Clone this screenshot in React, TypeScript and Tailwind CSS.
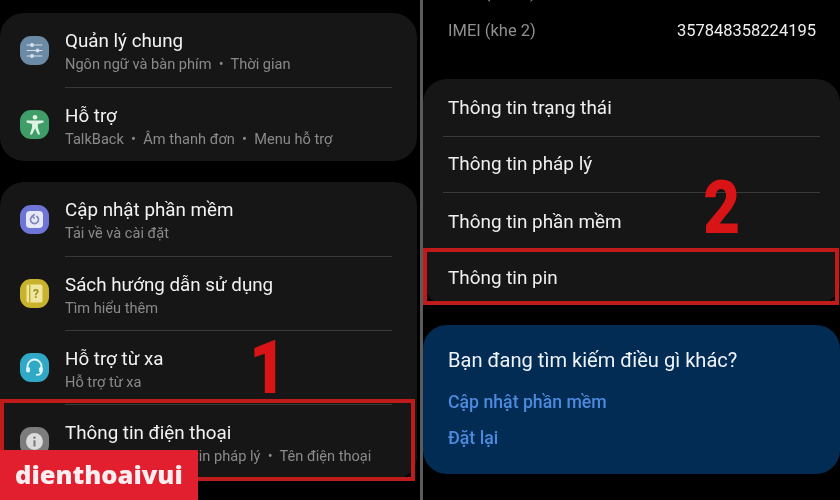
import type { FC, ReactNode } from 'react';

const FONT = "font-['Roboto','Noto_Sans',sans-serif]";

interface IRowProps {
  icon: ReactNode;
  title: string;
  sub: string;
  last?: boolean;
}

const SquircleIcon: FC<{ color: string; children: ReactNode }> = ({ color, children }) => (
  <div className={`w-[29px] h-[29px] -mt-px rounded-[11px] flex items-center justify-center shrink-0 ${color}`}>
    {children}
  </div>
);

const SlidersIcon = () => (
  <svg width="19" height="19" viewBox="0 0 19 19" fill="none" stroke="#d5dee8" strokeWidth="1.1" strokeLinecap="round">
    <path d="M2 4h15M2 9.5h15M2 15h15" />
    <circle cx="7" cy="4" r="1.4" fill="#d5dee8" />
    <circle cx="12.5" cy="9.5" r="1.4" fill="#d5dee8" />
    <circle cx="7" cy="15" r="1.4" fill="#d5dee8" />
  </svg>
);

const PersonIcon = () => (
  <svg width="20" height="22" viewBox="0 0 20 22" fill="#dff3e4">
    <circle cx="10" cy="3.2" r="2.3" />
    <path d="M1.5 6.6h17v1.9l-5.6 1.4v3.6l2.2 6.9h-2.1L10 14.2l-3 6.2H4.9l2.2-6.9V9.9L1.5 8.5z" />
  </svg>
);

const UpdateIcon = () => (
  <div className="w-[17px] h-[17px] rounded-[4px] bg-[#e6e8f8] flex items-center justify-center">
    <svg width="13" height="13" viewBox="0 0 13 13" fill="none" stroke="#7d82b8" strokeWidth="1.6" strokeLinecap="round">
      <path d="M8.8 3.4a4 4 0 1 1-4.6 0" />
      <path d="M6.2 1.6 4.2 3.3 6.2 5" />
    </svg>
  </div>
);

const BookIcon = () => (
  <svg width="21" height="21" viewBox="0 0 21 21" fill="none">
    <rect x="2.5" y="1.5" width="16" height="18" rx="2" fill="#efe6a0" />
    <rect x="5" y="1.5" width="1.4" height="18" fill="#c3ad25" />
    <text x="12" y="14.5" textAnchor="middle" fontSize="12" fontWeight="700" fontFamily="Roboto, sans-serif" fill="#a08c1c">?</text>
  </svg>
);

const HeadsetIcon = () => (
  <svg width="21" height="21" viewBox="0 0 21 21" fill="none" stroke="#e4f6fa" strokeWidth="1.8" strokeLinecap="round">
    <path d="M3.5 12V9.5a7 7 0 0 1 14 0V12" />
    <path d="M17.5 14c0 2.4-2 3.8-4.8 3.8" />
    <rect x="2.6" y="10.5" width="3" height="4.6" rx="1.2" fill="#e4f6fa" strokeWidth="0.8" />
    <rect x="15.4" y="10.5" width="3" height="4.6" rx="1.2" fill="#e4f6fa" strokeWidth="0.8" />
  </svg>
);

const InfoIcon = () => (
  <svg width="19" height="19" viewBox="0 0 19 19">
    <circle cx="9.5" cy="9.5" r="8.5" fill="#dcdcdc" />
    <circle cx="9.5" cy="5.6" r="1.2" fill="#777" />
    <rect x="8.5" y="8.2" width="2" height="6.4" rx="0.6" fill="#777" />
  </svg>
);

const SettingRow: FC<IRowProps> = ({ icon, title, sub, last }) => (
  <div className="h-[74px] first:h-[75px] flex items-center pl-5 pr-[25px]">
    {icon}
    <div className={`flex-1 h-full ml-4 flex flex-col justify-center pt-[4px] ${last ? '' : 'border-b border-[#3a3a3a]'}`}>
      <div className="text-[18.8px] leading-[24px] text-[#f2f2f2]">{title}</div>
      <div className="text-[14.6px] leading-[22px] text-[#8a8a8a] whitespace-pre">{sub}</div>
    </div>
  </div>
);

const InfoRow: FC<{ title: string; last?: boolean; size: string }> = ({ title, last, size }) => (
  <div className={`mx-5 pl-[5px] flex items-center text-[18.9px] text-[#efefef] ${size} ${last ? '' : 'border-b border-[#3a3a3a]'}`}>
    {title}
  </div>
);

const App: FC = () => {
  return (
    <div className={`relative w-[840px] h-[500px] overflow-hidden bg-black flex blur-[0.3px] ${FONT}`}>
      {/* left phone shot */}
      <div className="w-[420px] pt-[13px] pr-[3px] flex flex-col gap-[21px]">
        <div className="h-[148px] rounded-[24px] bg-[#161616]">
          <SettingRow
            icon={<SquircleIcon color="bg-[#6b8aa6]"><SlidersIcon /></SquircleIcon>}
            title="Quản lý chung"
            sub="Ngôn ngữ và bàn phím  •  Thời gian"
          />
          <SettingRow
            icon={<SquircleIcon color="bg-[#3f9e68]"><PersonIcon /></SquircleIcon>}
            title="Hỗ trợ"
            sub="TalkBack  •  Âm thanh đơn  •  Menu hỗ trợ"
            last
          />
        </div>
        <div className="h-[298px] rounded-[24px] bg-[#161616]">
          <SettingRow
            icon={<SquircleIcon color="bg-[#6f75d6]"><UpdateIcon /></SquircleIcon>}
            title="Cập nhật phần mềm"
            sub="Tải về và cài đặt"
          />
          <SettingRow
            icon={<SquircleIcon color="bg-[#c9b22c]"><BookIcon /></SquircleIcon>}
            title="Sách hướng dẫn sử dụng"
            sub="Tìm hiểu thêm"
          />
          <SettingRow
            icon={<SquircleIcon color="bg-[#2fa9c6]"><HeadsetIcon /></SquircleIcon>}
            title="Hỗ trợ từ xa"
            sub="Hỗ trợ từ xa"
          />
          <SettingRow
            icon={<SquircleIcon color="bg-[#7c7c7c]"><InfoIcon /></SquircleIcon>}
            title="Thông tin điện thoại"
            sub="Trạng thái  •  Thông tin pháp lý  •  Tên điện thoại"
            last
          />
        </div>
      </div>

      <div className="w-[3px] bg-[#5c5c5c]" />

      {/* right phone shot */}
      <div className="flex-1 flex flex-col">
        <div className="-mt-[25px] h-[37px] pl-[25px] pr-6 flex items-center justify-between text-[16.5px]">
          <span className="text-[#8f8f8f]">IMEI (khe 1)</span>
          <span className="text-[#f0f0f0]">357848358224187</span>
        </div>
        <div className="h-[38px] pl-[25px] pr-6 flex items-center justify-between text-[16.5px]">
          <span className="text-[#8f8f8f]">IMEI (khe 2)</span>
          <span className="text-[#f0f0f0]">357848358224195</span>
        </div>
        <div className="mt-[29px] h-[226px] rounded-[24px] bg-[#161616]">
          <InfoRow title="Thông tin trạng thái" size="h-[58px] pt-[2px]" />
          <InfoRow title="Thông tin pháp lý" size="h-[56px]" />
          <InfoRow title="Thông tin phần mềm" size="h-[56px] pt-[3px]" />
          <InfoRow title="Thông tin pin" size="h-[56px] pt-[2px]" last />
        </div>
        <div className="mt-[20px] h-[149px] rounded-[24px] bg-[#022c54] pl-[25px] pt-[22px]">
          <div className="text-[20.1px] leading-[26px] text-[#eef3f8]">Bạn đang tìm kiếm điều gì khác?</div>
          <div className="mt-[17px] text-[17.7px] leading-[24px] font-medium text-[#4d8ade]">Cập nhật phần mềm</div>
          <div className="mt-[12px] text-[17.7px] leading-[24px] font-medium text-[#4d8ade]">Đặt lại</div>
        </div>
      </div>

      {/* annotations */}
      <div className="absolute left-0 top-[399px] w-[415px] h-[82px] border-4 border-[#bf1b1b]" />
      <div className="absolute left-[423px] top-[248px] w-[416px] h-[57px] border-4 border-[#bf1b1b]" />
      <div className="absolute left-[246px] top-[330px] text-[75px] leading-[75px] font-black text-[#d81416] scale-x-[0.85]">1</div>
      <div className="absolute left-[700px] top-[170px] text-[75px] leading-[75px] font-black text-[#d81416] scale-x-[0.85]">2</div>

      <div className="absolute left-0 top-[450px] w-[198px] h-[50px] bg-[#e21f2f] flex items-center pl-[15px] pb-[1px]">
        <span className="font-['Open_Sans',sans-serif] font-extrabold text-[25.5px] leading-none text-[#fbeef0]">dienthoaivui</span>
      </div>
    </div>
  );
};

export default App;
